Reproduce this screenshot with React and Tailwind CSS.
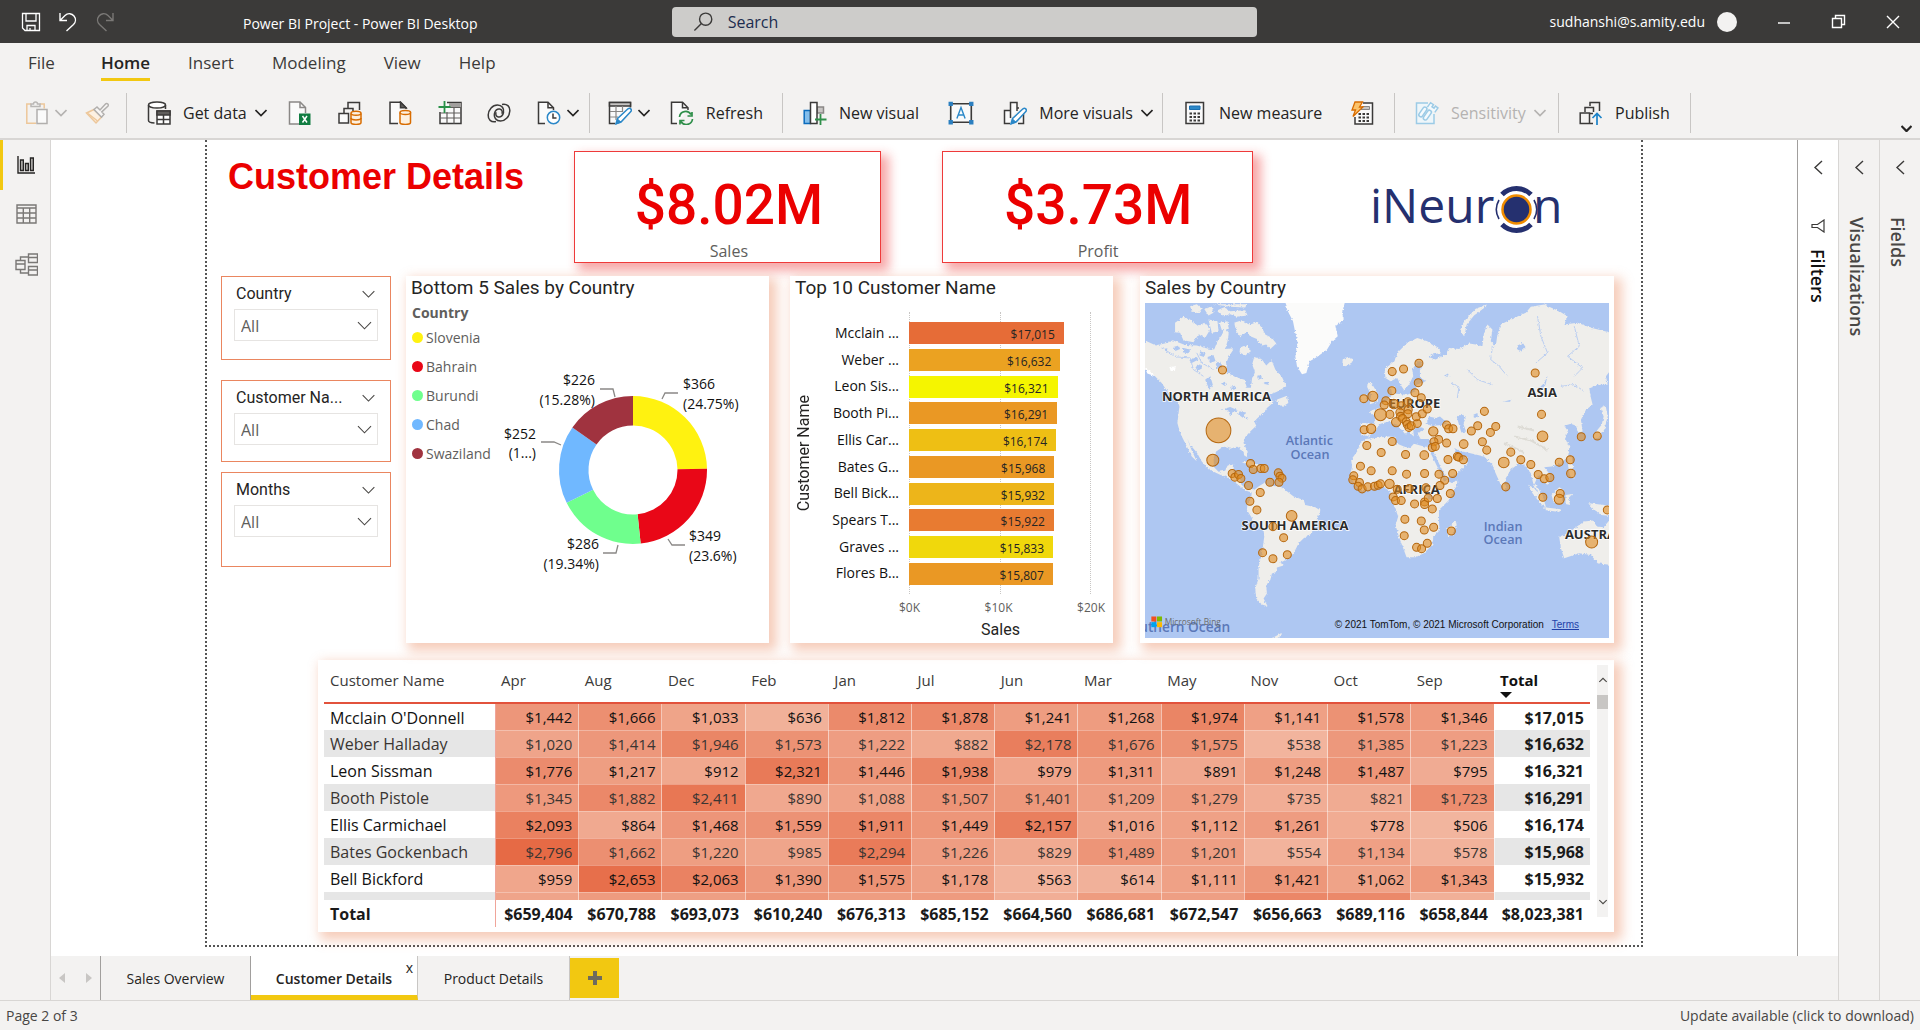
import React from "react";

const svgBase = { fill: "none", stroke: "#3b3a39", strokeWidth: 1.5 };

function Icon({ children, className = "", size = 24 }) {
  return (
    <svg width={size} height={size} viewBox="0 0 24 24" {...svgBase} className={`shrink-0 ${className}`} aria-hidden="true">
      {children}
    </svg>
  );
}

function Chevron({ className = "text-[#252423]", w = 12, sw = 1.6 }) {
  return (
    <svg width={w} height={w / 2 + 2} viewBox="0 0 12 8" fill="none" stroke="currentColor" strokeWidth={sw} className={`shrink-0 ${className}`} aria-hidden="true">
      <path d="M0.5 1l5.5 5.6L11.5 1" />
    </svg>
  );
}

/* ---------- ribbon icons ---------- */
const Paste = () => (
  <Icon>
    <g stroke="#edc79a"><path d="M6 3H1.8v19.2H11M15 3h4.2v4.500" fill="none" /></g>
    <path d="M6 5.500V3h2.500a2 2 0 0 1 4 0H15v2.500z" stroke="#b9b7b5" fill="#f3f2f1" />
    <path d="M12 8.500h10v14H12z" stroke="#b1afad" fill="#fafafa" />
  </Icon>
);
const Brush = () => (
  <Icon>
    <path d="M1.500 12l7.500-3.500 7.500 7.500-5.500 6z" stroke="#edc79a" fill="#fdf1e2" />
    <path d="M3 12.500l9.500 7.500" stroke="#edc79a" />
    <path d="M9 8.500l3-2.500 3 3 5.500-6a1.600 1.600 0 0 1 2.300 2.300l-6 5.600 2.200 2.300-2.500 3z" stroke="#b1afad" fill="#f7f6f5" />
  </Icon>
);
const GetData = () => (
  <Icon>
    <ellipse cx="10" cy="4" rx="8.500" ry="3" fill="#fff" />
    <path d="M1.500 4v15.500c0 1.400 2.500 2.400 6 2.600M18.500 4v4" />
    <path d="M10 10h13v13H10z" fill="#fff" />
    <path d="M10 10h13v4H10z" fill="#605e5c" />
    <path d="M10 18.500h13M16.500 14v9" />
  </Icon>
);
const Excel = () => (
  <Icon>
    <path d="M11 23H1.500V1H12l5.500 5.500V12" stroke="#8a8886" fill="#fafafa" />
    <path d="M12 1v5.500h5.500" stroke="#8a8886" />
    <path d="M11 12.500h11.500V24H11z" fill="#107c41" stroke="none" />
    <path d="M14.500 15l4.500 6.500M19 15l-4.500 6.500" stroke="#fff" />
  </Icon>
);
const DataHub = () => (
  <Icon>
    <path d="M10 7V1.500h11.500V9" />
    <path d="M6 12V7.500h9V10" />
    <path d="M1 12.500h9.500v9.500H1z" fill="#fafafa" />
    <g stroke="#d86c00" fill="#fdf0df">
      <path d="M13 12.500v9c0 2.500 10 2.500 10 0v-9" />
      <ellipse cx="18" cy="12.300" rx="5" ry="2" />
      <path d="M13 17c0 2.500 10 2.500 10 0" fill="none" />
    </g>
  </Icon>
);
const SqlServer = () => (
  <Icon>
    <path d="M10 22.500H2V1.200h10.500l5.500 5.500V8" fill="#fafafa" />
    <path d="M12.500 1.200v5.500H18z" fill="#605e5c" />
    <g stroke="#d86c00" fill="#fdf0df">
      <path d="M12 11.500v10c0 2.500 10.500 2.500 10.500 0v-10" />
      <ellipse cx="17.300" cy="11.500" rx="5.300" ry="2" />
    </g>
  </Icon>
);
const EnterData = () => (
  <Icon>
    <path d="M2 11v11.500h21V1.500H9" fill="#fafafa" />
    <path d="M11 2h12v4H11z" fill="#a19f9d" stroke="none" />
    <path d="M2 12h21M2 17h21M9 11v11.500M16 6v16.500M10 6.500h13" strokeWidth="1.200" stroke="#605e5c" />
    <path d="M6.500 0v12M0.500 6h12" stroke="#2a9149" strokeWidth="1.800" />
  </Icon>
);
const Dataverse = () => (
  <Icon>
    <path d="M9 20.500C4 21.500 .9 18.500 1.200 14 1.500 8.500 5.500 4 10.500 4c4.500 0 6.800 3.500 6 7.500-.6 3.200-2.800 5-5.200 4.500-2.300-.5-3-2.700-2.200-4.700" />
    <path d="M15 3.500C20 2.500 23.100 5.500 22.800 10c-.3 5.500-4.300 10-9.300 10-4.500 0-6.800-3.500-6-7.500.6-3.200 2.800-5 5.200-4.500 2.300.5 3 2.700 2.200 4.700" />
  </Icon>
);
const Recent = () => (
  <Icon>
    <path d="M8 22.500H1.500V1.200H11L16.500 6.700V9" fill="#fafafa" />
    <path d="M11 1.200v5.500h5.500" />
    <circle cx="16.500" cy="16.500" r="6.200" stroke="#2b88c8" fill="#fff" />
    <path d="M16 12.500v4.500h3.500" />
  </Icon>
);
const Pencil = () => (
  <g>
    <path d="M8 22.800l1.600-5.300L20 7.800c2-1.500 4.300.8 2.800 2.800L13 21z" fill="#fff" stroke="#2b88c8" />
    <path d="M8 23l1.500-5L13 21z" fill="#2b88c8" stroke="#2b88c8" strokeWidth="0.800" />
  </g>
);
const Transform = () => (
  <Icon>
    <path d="M7 22.500H1.500V1.500h21v5" fill="#fafafa" />
    <path d="M1.500 1.500h21V5h-21z" fill="#c8c6c4" />
    <path d="M2 10.500h13M2 16h8M8 5v14M14.500 5v6" stroke="#8a8886" strokeWidth="1.200" />
    <Pencil />
  </Icon>
);
const Refresh = () => (
  <Icon>
    <path d="M7 22.500H1.500V1.200h11L18 6.700V9" fill="#fafafa" />
    <path d="M12.500 1.200v5.500H18" />
    <g stroke="#2f8f4a" strokeWidth="1.700">
      <path d="M9.500 16a6.200 6.200 0 0 1 11.500-2.500M22 11v4h-4.500" />
      <path d="M22.500 18a6.200 6.200 0 0 1-11.500 2.500M10 23.500v-4h4.500" />
    </g>
  </Icon>
);
const NewVisual = () => (
  <Icon>
    <path d="M1.200 9.500h6.300v13H1.200z" fill="#83beec" stroke="#0b6cbd" />
    <path d="M14 6h6.500v6H14z" fill="#c8c6c4" stroke="#8a8886" />
    <path d="M7.500 1.500h6.500v21H7.500z" fill="#fff" />
    <path d="M17.500 13v11M12 18.500h11.500" stroke="#2f8f4a" strokeWidth="1.800" />
  </Icon>
);
const TextBox = () => (
  <Icon size={26}>
    <path d="M2.500 3.500h19v17h-19z" fill="#fafafa" />
    <g fill="#2b7fc0" stroke="none">
      <path d="M.5 1.500h4v4h-4zM19.500 1.500h4v4h-4zM.5 18.500h4v4h-4zM19.500 18.500h4v4h-4z" />
    </g>
    <path d="M8.200 17L12 7l3.800 10M9.500 13.800h5" stroke="#2b88c8" strokeWidth="1.300" />
  </Icon>
);
const MoreVisuals = () => (
  <Icon>
    <path d="M7 22.500H1.500V9.500H7M14 7h2M20.500 13v9.500H15M7.500 17V1.500h6.500V10" fill="#fafafa" />
    <Pencil />
  </Icon>
);
const Calc = () => (
  <Icon>
    <path d="M3 1.500h17.500v21H3z" fill="#fafafa" />
    <path d="M6.500 5h10.500v3.500H6.500z" fill="#2b88c8" stroke="#1a6fb0" strokeWidth="1" />
    <path d="M6.500 12.500h2.500M10.500 12.500H13M14.500 12.500H17M6.500 16h2.500M10.500 16H13M14.500 16H17M6.500 19.500h2.500M10.500 19.500H13M14.500 19.500H17" strokeWidth="2" />
  </Icon>
);
const QuickMeasure = () => (
  <Icon>
    <path d="M13 2h9.500v21H5v-7" fill="#fafafa" />
    <path d="M12 5.500h7.500v3H11z" fill="#c8c6c4" stroke="#8a8886" strokeWidth="1" />
    <path d="M8.500 13h2.500M12.500 13H15M16.500 13H19M8.500 16.500h2.500M12.500 16.500H15M16.500 16.500H19M8.500 20h2.500M12.500 20H15M16.500 20H19" strokeWidth="2" />
    <path d="M5 1h7.500L9.500 6h3.500L3 15.500 5.500 9H2z" fill="#fbc36b" stroke="#d86c00" strokeWidth="1.300" />
  </Icon>
);
const Sensitivity = () => (
  <Icon>
    <path d="M13 2H1.500v20.500h17.500V13" stroke="#9ccbe6" fill="#eef6fa" />
    <g transform="rotate(35 12 12)" stroke="#9ccbe6" fill="#f4fafd">
      <rect x="6" y="8" width="4" height="11" rx="2" />
      <rect x="11.500" y="8" width="4" height="11" rx="2" />
      <path d="M9 7V1.500h3.500V4H15V1.500h3V7" />
    </g>
  </Icon>
);
const Publish = () => (
  <Icon>
    <path d="M11 5V1.500h9.500V10M6 11V6.500h8.500V11" />
    <path d="M1.200 12h9.300v10.500H1.200zM10.500 12.500H14M10.500 22.500H14" />
    <path d="M18 24V12.500M13.500 17l4.500-4.500 4.500 4.500" stroke="#1a82c8" strokeWidth="1.700" />
  </Icon>
);

function RibbonButton({ icon, label, chevron, disabled, title, className = "" }) {
  return (
    <button type="button" aria-label={label || title} disabled={disabled} className={`flex items-center whitespace-nowrap text-base ${disabled ? "text-[#b5b3b1]" : "text-[#252423]"} ${className}`}>
      {icon}
      {label && <span className="ml-3">{label}</span>}
      {chevron && <Chevron className={label ? "ml-2" : "ml-[6px]"} />}
    </button>
  );
}

function Ribbon() {
  const group = "flex h-10 shrink-0 items-center justify-between border-r border-[#c8c6c4]";
  return (
    <div className="flex h-full items-center pl-[25px] pt-[2px]">
      <div className={`${group} w-[102px] pr-[17px]`}>
        <RibbonButton icon={<Paste />} title="Paste" chevron disabled />
        <RibbonButton icon={<Brush />} title="Format painter" disabled />
      </div>
      <div className={`${group} w-[463px] pl-5 pr-[10px]`}>
        <RibbonButton icon={<GetData />} label="Get data" chevron className="-mr-1" />
        <RibbonButton icon={<Excel />} title="Excel" />
        <RibbonButton icon={<DataHub />} title="Data hub" />
        <RibbonButton icon={<SqlServer />} title="SQL Server" />
        <RibbonButton icon={<EnterData />} title="Enter data" />
        <RibbonButton icon={<Dataverse />} title="Dataverse" />
        <RibbonButton icon={<Recent />} title="Recent sources" chevron />
      </div>
      <div className={`${group} w-[193px] pl-[18px] pr-[19px]`}>
        <RibbonButton icon={<Transform />} title="Transform data" chevron />
        <RibbonButton icon={<Refresh />} label="Refresh" />
      </div>
      <div className={`${group} w-[380px] pl-5 pr-[9px]`}>
        <RibbonButton icon={<NewVisual />} label="New visual" />
        <RibbonButton icon={<TextBox />} title="Text box" />
        <RibbonButton icon={<MoreVisuals />} label="More visuals" chevron />
      </div>
      <div className={`${group} w-[232px] pl-5 pr-5`}>
        <RibbonButton icon={<Calc />} label="New measure" />
        <RibbonButton icon={<QuickMeasure />} title="Quick measure" />
      </div>
      <div className={`${group} w-[164px] pl-5 pr-[10px]`}>
        <RibbonButton icon={<Sensitivity />} label="Sensitivity" chevron disabled />
      </div>
      <div className={`${group} w-[132px] pl-5 pr-5`}>
        <RibbonButton icon={<Publish />} label="Publish" />
      </div>
      <button type="button" aria-label="Collapse ribbon" className="ml-auto mr-2 self-end pb-[6px]">
        <Chevron sw={2.4} w={11} />
      </button>
    </div>
  );
}

function TitleBar() {
  return (
    <header className="flex h-[43px] items-center bg-[#3b3a39] text-white">
      <div className="flex w-[243px] shrink-0 items-center gap-[17px] pl-[21px]">
        <button type="button" aria-label="Save">
          <svg width="20" height="20" viewBox="0 0 20 20" fill="none" stroke="#fff" strokeWidth="1.300"><path d="M1.500 1.500h17v17H4l-2.500-2.500zM5 1.500V9h10V1.500M6 18.500v-5h8v5M9 16v2.500" /></svg>
        </button>
        <button type="button" aria-label="Undo">
          <svg width="20" height="20" viewBox="0 0 20 20" fill="none" stroke="#fff" strokeWidth="1.400"><path d="M2 1v7.500h7M2 8.500l5-5c3-3 7-2 9 .5s2 6-.5 8.500L8.500 19" /></svg>
        </button>
        <button type="button" aria-label="Redo" disabled>
          <svg width="20" height="20" viewBox="0 0 20 20" fill="none" stroke="#7a7876" strokeWidth="1.400"><path d="M18 1v7.500h-7M18 8.500l-5-5c-3-3-7-2-9 .5s-2 6 .5 8.500L11.500 19" /></svg>
        </button>
      </div>
      <div className="grid flex-1 grid-cols-[429fr_585fr_663fr] items-center">
        <h1 className="whitespace-nowrap pt-1 text-sm">Power BI Project - Power BI Desktop</h1>
        <label className="flex h-[30px] items-center rounded-sm bg-[#cdccca] pl-[21px]">
          <svg width="22" height="22" viewBox="0 0 22 22" fill="none" stroke="#3b3a39" strokeWidth="1.500"><circle cx="13.500" cy="8" r="6.500" /><path d="M9 12.500L1.500 20" /></svg>
          <input aria-label="Search" placeholder="Search" className="ml-[14px] w-full bg-transparent text-base outline-none placeholder:text-[#1c2c4f]" />
        </label>
        <div className="flex items-center justify-end pr-5">
          <span className="text-sm">sudhanshi@s.amity.edu</span>
          <span className="ml-3 size-5 rounded-full bg-[#f3f2f1]" />
          <button type="button" aria-label="Minimize" className="ml-10"><svg width="14" height="14" viewBox="0 0 14 14" stroke="#fff" strokeWidth="1.400"><path d="M1 8h12" /></svg></button>
          <button type="button" aria-label="Restore" className="ml-10"><svg width="15" height="15" viewBox="0 0 15 15" fill="none" stroke="#fff" strokeWidth="1.400"><path d="M1.500 4.500h9v9h-9zM4.500 4V1.500h9v9H11" /></svg></button>
          <button type="button" aria-label="Close" className="ml-10"><svg width="14" height="14" viewBox="0 0 14 14" stroke="#fff" strokeWidth="1.400"><path d="M1 1l12 12M13 1L1 13" /></svg></button>
        </div>
      </div>
    </header>
  );
}

function MenuBar() {
  const item = "h-[42px] pb-[3px] text-[17px] text-[#3b3a39]";
  return (
    <nav className="flex h-[42px] gap-[38px] pl-7">
      <button type="button" className={item}>File</button>
      <button type="button" className="relative ml-2 h-[42px] pb-[3px] text-[17px] font-semibold text-[#252423] after:absolute after:inset-x-0 after:bottom-1 after:h-[3px] after:bg-[#f2c811]">Home</button>
      <button type="button" className={item}>Insert</button>
      <button type="button" className={item}>Modeling</button>
      <button type="button" className={item}>View</button>
      <button type="button" className={item}>Help</button>
    </nav>
  );
}

function ViewRail() {
  return (
    <aside className="flex w-[51px] shrink-0 flex-col border-r border-[#d8d6d4] bg-[#f3f2f1]">
      <button type="button" aria-label="Report view" className="flex h-[50px] items-center border-l-[3px] border-[#f2c811] pl-[14px]">
        <svg width="18" height="18" viewBox="0 0 18 18" fill="#c8c6c4" stroke="#252423" strokeWidth="1.400"><path d="M1 0v17h17" fill="none" /><path d="M3.500 4h2.800v10.500H3.500zM8.500 7.500h2.800v7H8.500zM13.500 2h2.800v12.500h-2.800z" /></svg>
      </button>
      <button type="button" aria-label="Data view" className="flex h-[48px] items-center pl-4">
        <svg width="21" height="20" viewBox="0 0 21 20" fill="none" stroke="#7a7876" strokeWidth="1.400"><path d="M1 1h19v18H1zM1 4h19M1 9h19M1 14h19M7.300 4v15M13.700 4v15" /></svg>
      </button>
      <button type="button" aria-label="Model view" className="flex h-[52px] items-center pl-[15px]">
        <svg width="23" height="23" viewBox="0 0 23 23" fill="none" stroke="#7a7876" strokeWidth="1.400"><path d="M1 7.500h9v9H1zM1 11h9M13.500 1h9v8.500h-9zM13.500 4.500h9M13.500 13.500h9V22h-9zM13.500 17h9M5.500 7.500V4h8M5.500 16.500V20h8" /></svg>
      </button>
    </aside>
  );
}

function KpiCard({ value, label }) {
  return (
    <section className="mt-[11px] flex h-[112px] flex-col items-center border border-[#ee3a3a] bg-white pl-[2px] pt-[18px] shadow-[6px_6px_10px_2px_rgba(235,30,30,0.38)]">
      <p className="font-['Roboto'] text-[55px] font-medium leading-[70px] text-[#eb0000]">{value}</p>
      <p className="text-base leading-[22px] text-[#605e5c]">{label}</p>
    </section>
  );
}

function Logo() {
  return (
    <svg viewBox="1370 172 200 76" className="mt-8 ml-[119px] h-[76px] w-[200px]" role="img" aria-label="iNeuron">
      <g fill="#25306f" fontFamily="'Open Sans', sans-serif" fontSize="48" fontWeight="500">
        <text x="1368" y="223">iNeur</text>
        <text x="1531" y="223">n</text>
      </g>
      <circle cx="1514.500" cy="209.500" r="14" fill="#25306f" stroke="#f08c00" strokeWidth="2.500" />
      <g fill="none" stroke="#25306f">
        <path d="M1500 194.500a20.500 20.500 0 0 1 29 0M1500 224.500a20.500 20.500 0 0 0 29 0" strokeWidth="5" />
        <path d="M1497 200a19 19 0 0 0 0 19M1532 200a19 19 0 0 1 0 19" strokeWidth="1.600" />
      </g>
    </svg>
  );
}

function Slicer({ title, id, className = "" }) {
  return (
    <section className={`border border-[#ea8660] bg-white px-3 ${className}`}>
      <div className="flex h-8 items-center justify-between pl-[2px] pr-[3px] pt-[2px]">
        <label htmlFor={id} className="truncate font-['Roboto'] text-base text-[#252423]">{title}</label>
        <button type="button" aria-label={`${title} options`}><Chevron w={13} sw={1} className="text-[#484644]" /></button>
      </div>
      <div className="relative">
        <select id={id} className="h-8 w-full appearance-none border border-[#e6e4e2] bg-white pl-[6px] pt-[2px] text-base text-[#605e5c]">
          <option>All</option>
        </select>
        <Chevron w={15} sw={0.9} className="pointer-events-none absolute right-[6px] top-[12px] text-[#484644]" />
      </div>
    </section>
  );
}

const cardShadow = "bg-white shadow-[5px_5px_11px_3px_rgba(230,108,55,0.34)]";
const cardTitle = "whitespace-nowrap font-['Roboto'] text-[19px] leading-6 text-[#252423]";

const donut = [
  ["Slovenia", 24.75, "#fff210"],
  ["Bahrain", 23.6, "#e90717"],
  ["Burundi", 19.34, "#6fff8d"],
  ["Chad", 17.03, "#70b8ff"],
  ["Swaziland", 15.28, "#a0333f"],
];

function DonutCard() {
  let start = 0;
  const pt = (r, p) => {
    const a = (p / 100) * Math.PI * 2;
    return `${633 + r * Math.sin(a)} ${470 - r * Math.cos(a)}`;
  };
  return (
    <section className={`flex flex-col ${cardShadow}`}>
      <h2 className={`pl-[5px] ${cardTitle}`}>Bottom 5 Sales by Country</h2>
      <div className="flex flex-1">
        <div className="w-[90px] shrink-0 pl-[6px] pt-[3px] text-[#605e5c]">
          <h3 className="text-sm font-bold leading-5">Country</h3>
          <ul className="text-sm leading-[29px]">
            {donut.map(([name, , color]) => (
              <li key={name} className="flex items-center gap-[3px]">
                <span className="size-[11px] shrink-0 rounded-full" style={{ backgroundColor: color }} />
                {name}
              </li>
            ))}
          </ul>
        </div>
        <svg viewBox="496 300 273 343" className="h-[343px] min-w-0 flex-1" role="img" aria-label="Bottom 5 sales donut chart">
          {donut.map(([name, value, color]) => {
            const a = start;
            start += value;
            return <path key={name} fill={color} d={`M${pt(74, a)}A74 74 0 0 1 ${pt(74, start)}L${pt(44.5, start)}A44.500 44.500 0 0 0 ${pt(44.5, a)}Z`} />;
          })}
          <g fill="none" stroke="#8a8886" strokeWidth="1.300">
            <path d="M662 399l3-6h13M668 539l4 6h13M603 553h13l2-8M541 442h13l7 3M600 389h13l2 8" />
          </g>
          <g fill="#111" fontFamily="'Open Sans', sans-serif" fontSize="14">
            <text x="683" y="389">$366</text><text x="683" y="409">(24.75%)</text>
            <text x="689" y="541">$349</text><text x="689" y="561">(23.6%)</text>
            <g textAnchor="end">
              <text x="599" y="549">$286</text><text x="599" y="569">(19.34%)</text>
              <text x="536" y="439">$252</text><text x="536" y="458">(1...)</text>
              <text x="595" y="385">$226</text><text x="595" y="405">(15.28%)</text>
            </g>
          </g>
        </svg>
      </div>
    </section>
  );
}

const bars = [
  ["Mcclain ...", 17015, "#e66c37"],
  ["Weber ...", 16632, "#eba221"],
  ["Leon Sis...", 16321, "#f5f500"],
  ["Booth Pi...", 16291, "#ea9824"],
  ["Ellis Car...", 16174, "#eebf14"],
  ["Bates G...", 15968, "#ea9824"],
  ["Bell Bick...", 15932, "#edb51a"],
  ["Spears T...", 15922, "#e87b31"],
  ["Graves ...", 15833, "#f0d80c"],
  ["Flores B...", 15807, "#ea9824"],
];

function BarCard() {
  return (
    <section className={`flex flex-col ${cardShadow}`}>
      <h2 className={`pl-[5px] ${cardTitle}`}>Top 10 Customer Name</h2>
      <div className="mt-3 flex h-[282px] pr-[22px]">
        <div className="flex w-7 items-center justify-center">
          <span className="rotate-180 font-['Roboto'] text-base text-[#252423] [writing-mode:vertical-rl]">Customer Name</span>
        </div>
        <ul className="mt-2 flex h-[267px] w-[81px] flex-col text-right text-sm leading-[26px] text-[#111]">
          {bars.map(([n]) => <li key={n} className="flex-1 whitespace-nowrap">{n}</li>)}
        </ul>
        <div className="relative ml-[10px] flex-1">
          <div className="absolute inset-0 flex justify-between">
            <i className="border-l border-dotted border-[#c8c6c4]" />
            <i className="border-l border-dotted border-[#c8c6c4]" />
            <i className="border-l border-dotted border-[#c8c6c4]" />
          </div>
          <ul className="relative mt-2 flex h-[267px] flex-col">
            {bars.map(([n, v, c]) => (
              <li key={n} className="flex flex-1 items-center">
                <div className="h-[22px] pr-[9px] text-right text-xs leading-[25px] text-[#252423]" style={{ width: `${v / 200}%`, backgroundColor: c }}>
                  ${v.toLocaleString("en-US")}
                </div>
              </li>
            ))}
          </ul>
        </div>
      </div>
      <div className="flex justify-between pl-[109px] pr-2 pt-1 text-xs leading-5 text-[#605e5c]">
        <span>$0K</span><span>$10K</span><span>$20K</span>
      </div>
      <p className="pl-[98px] text-center font-['Roboto'] text-base leading-6 text-[#252423]">Sales</p>
    </section>
  );
}

const bubbles = [
  [277, 301], [248, 571, 18], [361, 581], [369, 599], [392, 596], [402, 596], [306, 611], [314, 622], [325, 614], [332, 626], [355, 647], [444, 609], [449, 619], [455, 625], [419, 637], [446, 637], [390, 668], [359, 694], [380, 720], [484, 738, 16], [428, 770], [460, 803], [397, 848], [471, 854], [428, 866],
  [785, 306], [819, 298], [865, 281], [863, 339], [784, 363], [700, 387], [727, 380, 15], [853, 369], [872, 384], [766, 393], [761, 406], [750, 435, 18], [778, 434], [790, 403, 14], [832, 396], [812, 408], [833, 420], [808, 428], [810, 440], [832, 432], [797, 457, 14], [816, 446], [827, 456], [830, 464], [835, 473], [842, 468], [860, 461], [857, 441], [875, 432], [890, 418], [701, 480], [722, 477, 14],
  [948, 466], [954, 477], [967, 477], [908, 485, 14], [924, 509], [948, 520], [910, 516], [905, 533], [914, 530], [999, 523, 13], [1022, 484], [1041, 468], [1061, 425], [1095, 470], [1079, 488], [1055, 516], [1068, 541], [952, 569], [980, 560], [984, 562], [998, 570], [966, 611],
  [709, 527], [785, 515], [752, 548], [825, 554], [881, 556, 13], [690, 589], [722, 603], [785, 603], [828, 613], [882, 611], [925, 613], [942, 631], [928, 647], [959, 671], [670, 618], [667, 630], [687, 638], [683, 649], [695, 657], [712, 651], [732, 649], [743, 646], [750, 642], [777, 642, 14], [800, 658], [836, 656], [886, 654], [788, 681], [795, 692], [812, 692], [852, 702], [882, 696], [882, 704], [893, 684], [920, 686], [905, 717], [823, 748], [872, 753], [881, 780], [909, 772], [821, 797], [962, 783], [858, 832], [873, 836], [890, 820],
  [1213, 310], [1232, 434], [1235, 500, 16], [1351, 501], [1399, 499], [1119, 578, 16], [1140, 547], [1170, 570], [1200, 584], [1285, 577], [1318, 570], [1320, 611, 13], [1222, 614], [1240, 627], [1257, 623], [1125, 651], [1236, 682], [1288, 671], [1285, 688, 15], [1429, 720], [1382, 816, 18],
];

const land = [
  "M45 213L78 228L110 220L128 212L165 226L200 228L228 236L252 240L262 215L276 195L284 175L296 190L292 215L285 238L312 236L298 258L288 280L290 308L315 322L343 330L350 354L362 354L365 330L374 308L366 284L372 262L395 270L408 288L424 272L435 300L455 322L468 350L440 366L405 380L390 395L418 384L430 398L410 415L400 430L382 445L372 455L378 468L360 485L345 502L340 520L352 545L352 562L343 558L332 538L320 530L300 537L280 530L258 545L250 565L252 592L265 606L285 603L292 588L312 583L308 608L325 612L330 640L345 655L372 658L365 668L345 662L320 642L295 624L270 615L235 598L215 575L200 548L180 525L172 508L184 540L200 574L185 560L165 520L150 490L142 460L148 410L140 385L115 370L95 340L75 320L45 300Z",
  "M135 160L160 142L180 150L205 170L222 160L240 180L225 205L205 195L190 218L160 212L150 190L135 188Z",
  "M180 110L200 104L215 118L205 132L185 125ZM222 118L245 112L250 130L235 138ZM262 122L280 114L300 125L345 122L352 138L320 142L300 134L280 140ZM250 104L350 104L345 114L300 112ZM235 150L262 155L265 185L245 190L240 170ZM268 160L292 155L296 178L275 182Z",
  "M312 160L335 152L360 165L380 158L395 175L405 195L425 205L438 222L420 238L408 225L395 228L380 208L360 200L350 188L330 200L318 185ZM330 232L352 228L362 245L345 258L328 248Z",
  "M435 392L470 378L474 400L455 412Z",
  "M637 270L652 262L667 268L662 284L645 290L636 282Z",
  "M335 578L360 572L388 588L412 590L405 602L380 598L355 584Z",
  "M365 665L385 650L400 640L420 648L450 650L465 660L490 680L520 690L525 705L555 712L570 722L562 745L548 765L545 790L520 805L505 820L490 850L470 868L450 878L462 886L440 892L438 906L425 910L420 930L408 945L410 970L400 985L412 1008L395 1003L378 985L375 955L385 925L385 890L395 850L402 800L400 780L375 760L350 720L352 700L362 688Z",
  "M690 520L705 508L735 505L775 500L795 502L795 520L820 530L838 535L850 522L880 530L900 532L905 545L918 575L930 605L945 628L960 640L980 632L978 648L955 690L925 720L925 760L928 780L908 800L905 825L880 850L855 862L828 862L818 835L805 800L795 765L803 740L790 705L778 685L780 665L765 655L740 652L715 660L690 660L668 635L658 620L665 590L662 570L680 545Z",
  "M975 752L978 765L965 795L952 798L950 775L962 765Z",
  "M692 492L690 460L730 462L735 440L715 425L745 415L760 400L775 388L785 375L780 350L792 350L795 372L830 375L855 365L858 345L885 335L868 322L868 300L878 275L862 275L845 300L848 320L835 345L820 360L810 345L800 325L780 335L765 325L762 300L790 275L805 245L830 220L860 205L890 215L925 235L930 250L905 255L895 262L915 270L945 255L955 235L985 238L1015 222L1035 225L1055 230L1060 190L1070 165L1085 180L1080 215L1095 230L1100 195L1110 165L1140 150L1185 130L1200 112L1240 105L1285 125L1310 140L1300 165L1340 160L1380 175L1440 190L1440 300L1425 320L1430 345L1400 345L1375 355L1380 385L1385 405L1365 420L1350 450L1355 485L1342 488L1335 468L1320 462L1300 468L1312 485L1302 505L1315 530L1312 560L1290 580L1262 590L1240 592L1258 615L1250 645L1235 635L1222 615L1212 640L1225 660L1240 685L1226 675L1207 640L1200 610L1180 585L1165 580L1140 600L1125 625L1120 650L1108 640L1090 600L1085 585L1060 560L1010 548L990 545L970 535L985 555L1012 562L1010 582L975 615L945 628L930 600L908 555L905 530L900 508L870 508L860 490L885 478L860 470L848 480L850 500L838 490L825 465L808 452L835 480L825 494L800 465L775 455L750 462L735 480L715 500Z",
  "M718 404L742 396L742 372L726 345L712 336L710 352L722 375ZM690 380L706 374L708 394L692 398Z",
  "M1000 200L988 182L1005 150L1035 118L1068 105L1065 112L1030 138L1008 165Z",
  "M1384 506L1398 482L1412 465L1418 440L1408 415L1424 408L1430 440L1420 480L1402 505Z",
  "M1310 560L1322 558L1326 590L1332 622L1318 622L1312 590Z",
  "M1192 645L1210 655L1240 690L1245 712L1230 702L1205 670ZM1240 712L1290 718L1285 726L1242 720ZM1262 675L1285 652L1298 660L1292 700L1268 698ZM1304 675L1325 672L1312 685L1318 705L1304 702Z",
  "M1372 700L1395 702L1440 708L1440 738L1410 735L1385 715Z",
  "M1116 650L1124 645L1128 658L1118 660Z",
  "M1285 800L1310 790L1340 768L1360 755L1385 752L1398 770L1418 772L1440 745L1440 885L1400 880L1380 855L1345 850L1300 865L1290 835Z",
  "M425 1104L455 1088L450 1098L438 1106Z",
];

function WorldMap() {
  return (
    <svg viewBox="45 100 1389 1004" preserveAspectRatio="xMidYMid slice" className="h-[335px] w-full" role="img" aria-label="Sales by country map">
      <defs>
        <filter id="coast" x="0" y="0" width="100%" height="100%">
          <feTurbulence type="fractalNoise" baseFrequency="0.14" numOctaves="3" seed="4" />
          <feDisplacementMap in="SourceGraphic" scale="9" xChannelSelector="R" yChannelSelector="G" />
        </filter>
      </defs>
      <rect x="45" y="100" width="1389" height="1004" fill="#aec7f2" />
      <g filter="url(#coast)">
        {land.map((d, i) => <path key={i} d={d} fill="#efeeeb" />)}
        <path d="M465 92L645 92L635 130L640 150L615 170L622 200L605 215L590 240L560 262L538 275L528 310L515 314L500 290L495 260L502 220L495 190L488 155L470 120Z" fill="#fbfbfa" />
        <g fill="#aec7f2">
          <path d="M888 462L895 440L915 445L928 440L948 458L935 466L905 468Z" />
          <path d="M978 440L995 432L1005 445L998 462L1006 485L992 488L985 465Z" />
          <path d="M1028 435L1040 430L1042 442L1030 445Z" />
          <path d="M273 420L300 412L323 422L308 426L300 440L294 422ZM330 422L348 430L338 438L356 446L338 444L324 434Z" />
          <path d="M160 235L180 240L175 252L158 248ZM178 272L200 262L205 270L185 280ZM225 330L240 318L248 345L238 360Z" />
          <path d="M130 232L146 228L150 238L136 244ZM210 245L226 250L222 262L208 258ZM232 262L250 256L256 274L240 280ZM196 292L210 284L216 296L202 304ZM256 282L270 276L276 292L262 298ZM100 238L112 236L110 246Z" />
          <path d="M380 320L392 316L396 326L384 330ZM400 342L412 336L416 346ZM300 352L314 348L318 358L304 362ZM272 342L284 336L288 348Z" />
          <path d="M1222 358L1240 340L1250 318L1244 345L1228 364Z" />
          <path d="M890 672L902 670L904 687L892 688Z" />
          <path d="M1160 228L1176 220L1184 232L1172 246L1160 240ZM940 318L952 312L956 322ZM1118 396L1140 390L1138 396Z" />
        </g>
        <g fill="none" stroke="#aec7f2">
          <path d="M904 548L946 634" strokeWidth="9" />
          <path d="M975 542L1004 570" strokeWidth="8" />
          <path d="M1085 230L1080 270L1105 290L1130 320M1220 140L1230 200L1250 250L1215 280M1330 170L1345 230L1310 260L1355 295L1330 320M1290 350L1330 345L1360 365M200 250L215 280L250 300M95 235L140 262L180 265L190 300L220 320M960 340L985 352L980 385M1010 300L1040 330L1085 345" strokeWidth="2.500" />
        </g>
        <path d="M1150 500L1200 512L1250 540M1120 520L1180 548M1160 470L1210 482" stroke="#dddbd5" strokeWidth="6" fill="none" />
        <path d="M45 295L60 305L75 320L52 312ZM118 292L138 290L134 304L122 304Z" fill="#fff" />
      </g>
      <g fontFamily="'Open Sans', sans-serif" fontWeight="700" fontSize="39" fill="#2b2b2b" stroke="#fff" strokeWidth="4" paintOrder="stroke" textAnchor="middle">
        <text x="259" y="395">NORTH AMERICA</text>
        <text x="494" y="779">SOUTH AMERICA</text>
        <text x="852" y="415">EUROPE</text>
        <text x="858" y="671">AFRICA</text>
        <text x="1234" y="382">ASIA</text>
        <text x="1302" y="806" textAnchor="start">AUSTRALIA</text>
      </g>
      <g fontFamily="'Open Sans', sans-serif" fontWeight="600" fontSize="38" fill="#5b78b8" textAnchor="middle">
        <text x="537" y="527">Atlantic</text><text x="539" y="567">Ocean</text>
        <text x="1117" y="782">Indian</text><text x="1117" y="822">Ocean</text>
        <text x="300" y="1085" fontSize="41" textAnchor="end">Southern Ocean</text>
      </g>
      <g fill="#e08a1e" fillOpacity="0.6" stroke="#b5670f" strokeWidth="3">
        <circle cx="265" cy="482" r="37" />
        {bubbles.map(([x, y, r = 12], i) => <circle key={i} cx={x} cy={y} r={r} />)}
      </g>
      <path d="M64 1039h15v15H64z" fill="#f25022" /><path d="M81 1039h15v15H81z" fill="#7fba00" />
      <path d="M64 1056h15v15H64z" fill="#00a4ef" /><path d="M81 1056h15v15H81z" fill="#ffb900" />
      <text x="104" y="1065" fontFamily="'Open Sans', sans-serif" fontSize="25" fill="#6b6b6b">Microsoft Bing</text>
    </svg>
  );
}

function MapCard() {
  return (
    <section className={`px-[5px] ${cardShadow}`}>
      <h2 className={`mb-[3px] ${cardTitle}`}>Sales by Country</h2>
      <div className="relative overflow-hidden">
        <WorldMap />
        <p className="absolute bottom-[5px] right-[30px] whitespace-nowrap font-['Liberation_Sans'] text-[10px] leading-4 text-[#111]">
          © 2021 TomTom, © 2021 Microsoft Corporation
          <a href="#terms" className="ml-2 text-[#1f3fa8] underline">Terms</a>
        </p>
      </div>
    </section>
  );
}

const months = ["Apr", "Aug", "Dec", "Feb", "Jan", "Jul", "Jun", "Mar", "May", "Nov", "Oct", "Sep"];
const rows = [
  ["Mcclain O'Donnell", [1442, 1666, 1033, 636, 1812, 1878, 1241, 1268, 1974, 1141, 1578, 1346], 17015],
  ["Weber Halladay", [1020, 1414, 1946, 1573, 1222, 882, 2178, 1676, 1575, 538, 1385, 1223], 16632],
  ["Leon Sissman", [1776, 1217, 912, 2321, 1446, 1938, 979, 1311, 891, 1248, 1487, 795], 16321],
  ["Booth Pistole", [1345, 1882, 2411, 890, 1088, 1507, 1401, 1209, 1279, 735, 821, 1723], 16291],
  ["Ellis Carmichael", [2093, 864, 1468, 1559, 1911, 1449, 2157, 1016, 1112, 1261, 778, 506], 16174],
  ["Bates Gockenbach", [2796, 1662, 1220, 985, 2294, 1226, 829, 1489, 1201, 554, 1134, 578], 15968],
  ["Bell Bickford", [959, 2653, 2063, 1390, 1575, 1178, 563, 614, 1111, 1421, 1062, 1343], 15932],
];
const nextRow = [1020, 1300, 1180, 1450, 1250, 1300, 700, 1280, 1180, 1900, 1850, 650];
const totals = ["$659,404", "$670,788", "$693,073", "$610,240", "$676,313", "$685,152", "$664,560", "$686,681", "$672,547", "$656,663", "$689,116", "$658,844"];
const money = (n) => "$" + n.toLocaleString("en-US");

function heat(v) {
  const t = Math.min(1, Math.max(0, (v - 500) / 2300));
  const mix = (a, b) => Math.round(a + (b - a) * t);
  return `rgb(${mix(242, 230)},${mix(181, 106)},${mix(158, 69)})`;
}

function SalesTable() {
  return (
    <section className={`ml-[111px] mr-[27px] mt-[17px] flex h-[272px] pl-[6px] pr-[6px] pt-[5px] ${cardShadow}`}>
      <table className="h-fit flex-1 table-fixed border-collapse text-[15px] leading-[22px]">
        <colgroup>
          <col className="w-[171px]" />
          {months.map((m) => <col key={m} />)}
          <col className="w-24" />
        </colgroup>
        <thead>
          <tr className="h-[38px] border-b-2 border-[#e2523c] text-left text-[#3b3a39]">
            <th className="pb-2 pl-[6px] font-normal">Customer Name</th>
            {months.map((m) => <th key={m} className="pb-2 pl-[6px] font-normal">{m}</th>)}
            <th className="relative pb-2 pl-[6px] font-bold text-[#111]">
              Total
              <span className="absolute bottom-1 left-[6px] border-x-[6px] border-t-[6px] border-x-transparent border-t-[#111]" />
            </th>
          </tr>
        </thead>
        <tbody>
          {rows.map(([name, vals, total], r) => (
            <tr key={name} className={`h-[27px] ${r % 2 ? "bg-[#e6e6e6] text-[#3a3532]" : "text-[#111]"}`}>
              <td className="border-r border-[#f0a59a] pl-[6px] pt-px text-base leading-[22px]">{name}</td>
              {vals.map((v, i) => (
                <td key={i} className="border-b border-r border-b-white/30 border-r-white/50 pr-[6px] pt-px text-right" style={{ backgroundColor: heat(v) }}>{money(v)}</td>
              ))}
              <td className="pr-[6px] pt-px text-right text-base font-bold leading-[22px] text-[#1a1a1a]">{money(total)}</td>
            </tr>
          ))}
          <tr className="h-2 bg-[#e6e6e6]" aria-hidden="true">
            <td className="border-r border-[#f0a59a]" />
            {nextRow.map((v, i) => <td key={i} className="border-r border-white/50" style={{ backgroundColor: heat(v) }} />)}
            <td />
          </tr>
        </tbody>
        <tfoot>
          <tr className="h-[27px] text-right text-base font-bold leading-[22px] text-[#1a1a1a]">
            <td className="border-r border-[#f0a59a] pl-[6px] text-left">Total</td>
            {totals.map((t) => <td key={t} className="whitespace-nowrap pr-[6px]">{t}</td>)}
            <td className="pr-[6px]">$8,023,381</td>
          </tr>
        </tfoot>
      </table>
      <div className="ml-[7px] flex h-[252px] w-[11px] flex-col items-center bg-[#f3f2f1] text-[#484644]">
        <Chevron w={8} className="mt-3 rotate-180" />
        <span className="mt-3 h-[14px] w-full bg-[#c8c6c4]" />
        <Chevron w={8} className="mb-3 mt-auto" />
      </div>
    </section>
  );
}

function ReportPage() {
  return (
    <div className="mx-[154px] h-[807px] border-x-2 border-b-2 border-dotted border-[#555]">
      <div className="grid h-[136px] grid-cols-[346fr_307fr_60fr_311fr_388fr] pl-[21px]">
        <h2 className="whitespace-nowrap pt-[15px] font-['Liberation_Sans'] text-4xl font-bold leading-[44px] text-[#eb0000]">Customer Details</h2>
        <KpiCard value="$8.02M" label="Sales" />
        <span />
        <KpiCard value="$3.73M" label="Profit" />
        <Logo />
      </div>
      <div className="grid h-[367px] grid-cols-[170fr_15fr_363fr_21fr_323fr_27fr_474fr_27fr] pl-[14px]">
        <div>
          <Slicer id="country" title="Country" className="h-[84px]" />
          <Slicer id="customer" title="Customer Na..." className="mt-5 h-[82px]" />
          <Slicer id="months" title="Months" className="mt-[10px] h-[95px]" />
        </div>
        <span />
        <DonutCard />
        <span />
        <BarCard />
        <span />
        <MapCard />
      </div>
      <SalesTable />
    </div>
  );
}

function SidePane({ label, className, labelClass = "", children }) {
  return (
    <aside className={`flex w-[41px] shrink-0 flex-col items-center border-l pt-5 ${className}`}>
      <button type="button" aria-label={`Expand ${label}`}>
        <svg width="10" height="15" viewBox="0 0 10 15" fill="none" stroke="#3b3a39" strokeWidth="1.400"><path d="M9 1L2 7.500 9 14" /></svg>
      </button>
      {children}
      <h2 className={`text-lg font-semibold leading-6 [writing-mode:vertical-rl] ${labelClass}`}>{label}</h2>
    </aside>
  );
}

function PageTabs() {
  return (
    <div className="flex h-11 shrink-0 bg-[#f3f2f1] text-sm text-[#252423]">
      <div className="flex w-[50px] items-center justify-between border-r border-[#a19f9d] px-2">
        <button type="button" aria-label="Previous page" className="border-y-[5px] border-r-[6px] border-y-transparent border-r-[#c8c6c4]" />
        <button type="button" aria-label="Next page" className="border-y-[5px] border-l-[6px] border-y-transparent border-l-[#c8c6c4]" />
      </div>
      <button type="button" className="w-[150px] border-r border-[#a19f9d] pt-[2px]">Sales Overview</button>
      <div className="relative w-[167px] border-b-[5px] border-r border-b-[#f2c811] border-r-[#c8c6c4] bg-white">
        <button type="button" className="h-full w-full pt-[7px] font-semibold">Customer Details</button>
        <button type="button" aria-label="Delete page" className="absolute right-1 top-0 text-sm leading-6">x</button>
      </div>
      <button type="button" className="w-[152px] border-r border-[#c8c6c4] pt-[2px]">Product Details</button>
      <button type="button" aria-label="New page" className="my-[2px] flex w-[49px] items-center justify-center bg-[#f2c811]">
        <svg width="16" height="16" viewBox="0 0 16 16" stroke="#6e6a5e" strokeWidth="4"><path d="M8 1v14M1 8h14" /></svg>
      </button>
    </div>
  );
}

export default function App() {
  return (
    <div className="flex h-screen flex-col overflow-hidden bg-[#f3f2f1] font-['Open_Sans',sans-serif]">
      <TitleBar />
      <MenuBar />
      <div className="h-[55px] shrink-0 border-b-2 border-[#d8d6d4]">
        <Ribbon />
      </div>
      <div className="flex min-h-0 flex-1">
        <ViewRail />
        <main className="flex min-w-0 flex-1 flex-col bg-white">
          <div className="min-h-0 flex-1 overflow-hidden">
            <ReportPage />
          </div>
          <PageTabs />
        </main>
        <div className="flex">
          <SidePane label="Filters" className="mb-11 border-[#a19f9d] bg-white text-[#111]">
            <svg width="14" height="14" viewBox="0 0 14 14" fill="none" stroke="#3b3a39" strokeWidth="1.200" className="mb-4 mt-11 shrink-0"><path d="M13 1v12L6.500 8.500H1v-3h5.500z" /></svg>
          </SidePane>
          <SidePane label="Visualizations" labelClass="mr-1" className="border-[#d8d6d4] text-[#484644]"><span className="h-[42px] shrink-0" /></SidePane>
          <SidePane label="Fields" labelClass="mr-1" className="border-[#d8d6d4] text-[#484644]"><span className="h-[42px] shrink-0" /></SidePane>
        </div>
      </div>
      <footer className="flex h-[30px] shrink-0 items-center justify-between border-t border-[#d8d6d4] px-[6px] text-sm text-[#484644]">
        <span>Page 2 of 3</span>
        <span>Update available (click to download)</span>
      </footer>
    </div>
  );
}
